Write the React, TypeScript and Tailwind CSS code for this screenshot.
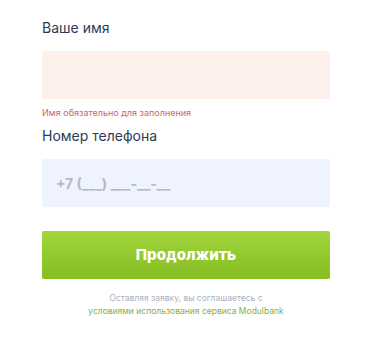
export default function App() {
  return (
    <div className="min-h-[337px] w-[372px] bg-white font-['Inter','Noto_Sans',sans-serif]">
      <form className="ml-[42px] flex w-[288px] flex-col pt-[18px]">
        <label className="text-[14px] leading-[20px] text-[#2e3a56]">Ваше имя</label>
        <input
          type="text"
          className="mt-[13px] h-[48px] w-full rounded-[2px] bg-[#fef0eb] px-[16px] text-[14px] outline-none"
        />
        <span className="mt-[8px] text-[9px] leading-[12px] text-[#c8686a]">
          Имя обязательно для заполнения
        </span>
        <label className="mt-[7px] text-[14px] leading-[20px] text-[#2e3a56]">Номер телефона</label>
        <input
          type="tel"
          placeholder="+7 (___) ___-__-__"
          className="mt-[13px] h-[48px] w-full rounded-[2px] bg-[#eff3fd] px-[14px] text-[14px] font-bold text-[#2e3a56] outline-none placeholder:text-[#b3b9c6]"
        />
        <button
          type="button"
          className="mt-[24px] h-[48px] w-full rounded-[2px] bg-gradient-to-b from-[#a1d53d] to-[#86bd21] text-[15px] font-extrabold tracking-[0.2px] text-white"
        >
          Продолжить
        </button>
        <p className="mt-[13px] text-center text-[8.5px] leading-[13px] text-[#a9b0c1]">
          Оставляя заявку, вы соглашаетесь с
          <br />
          <a className="text-[#87b03a]">условиями использования сервиса Modulbank</a>
        </p>
      </form>
    </div>
  )
}
